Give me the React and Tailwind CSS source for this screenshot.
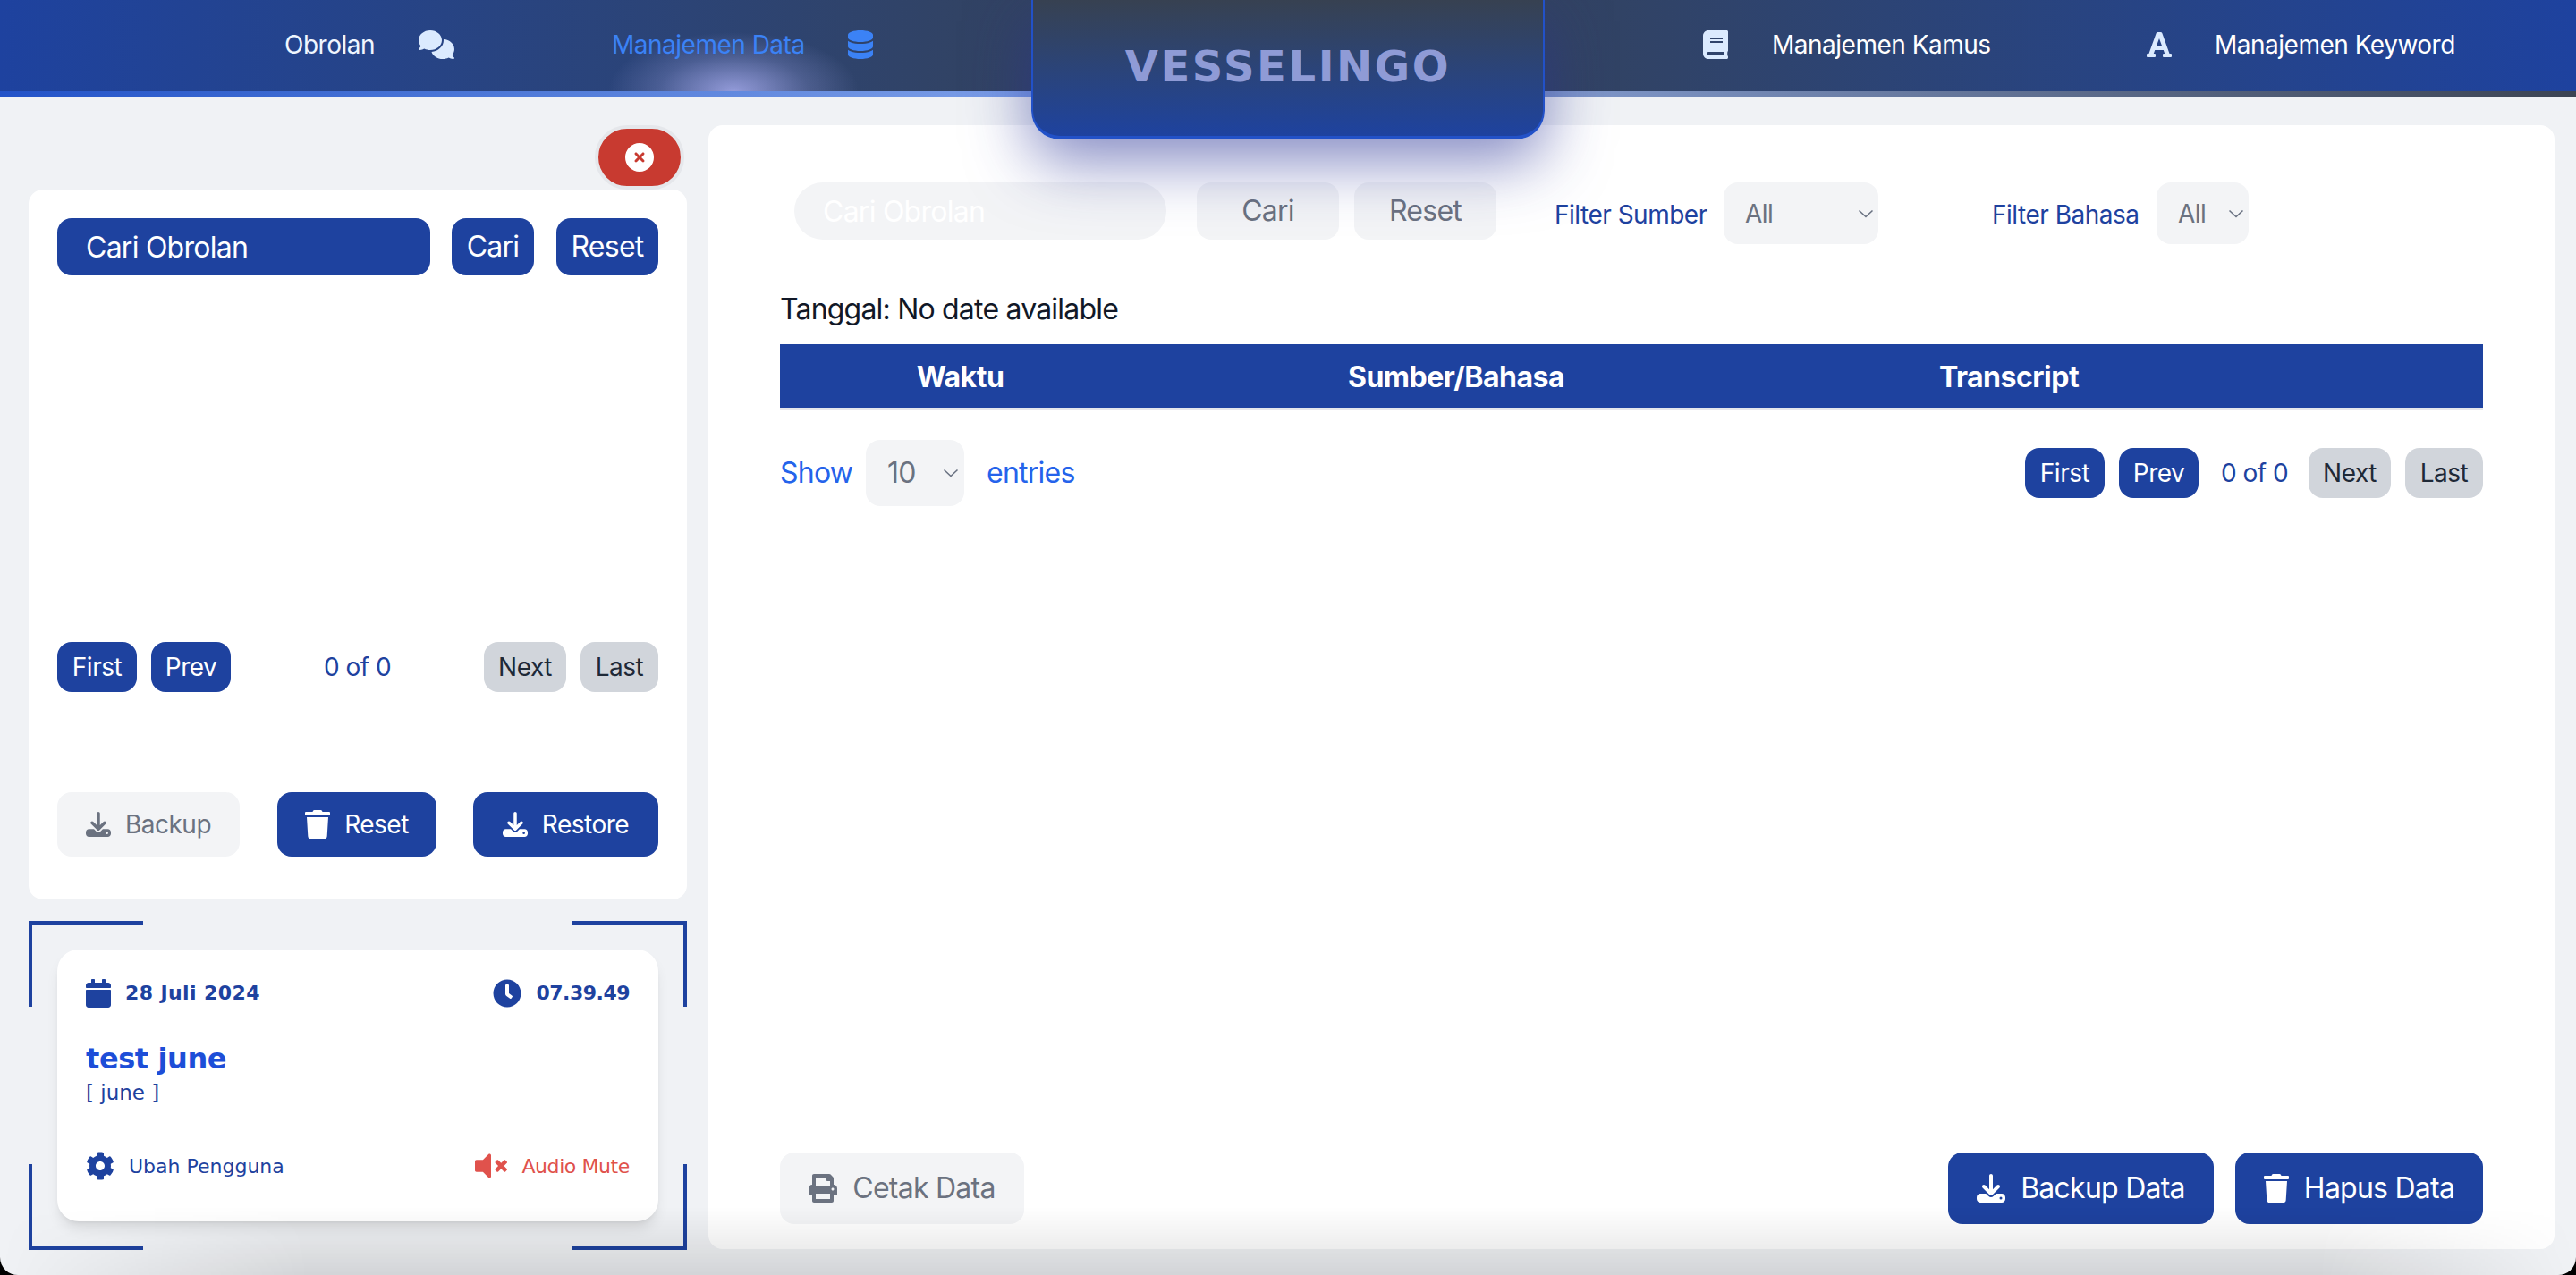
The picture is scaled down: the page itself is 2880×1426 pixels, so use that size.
import { FaBook, FaFont, FaCalendar, FaClock, FaCog, FaVolumeMute, FaTrash, FaPrint } from "react-icons/fa";
import { FaComments, FaDatabase, FaDownload, FaCircleXmark } from "react-icons/fa6";

function Chevron() {
  return (
    <svg viewBox="0 0 18 10" className="w-[18px] h-[10px] text-gray-500" fill="none" stroke="currentColor" strokeWidth="1.6">
      <path d="M1.5 1.5 9 8.5l7.5-7" />
    </svg>
  );
}

function Pager({ small }) {
  const btn = "h-[56px] rounded-2xl flex items-center justify-center text-[28px]";
  const blue = btn + " bg-[#1e429f] text-white";
  const gray = btn + " bg-[#d1d5db] text-[#1f2937]";
  return (
    <>
      <button className={blue + " w-[89px]"}>First</button>
      <button className={blue + " w-[89px] ml-4"}>Prev</button>
      <span className={small ? "text-[28px] text-[#1e429f] ml-[104px] mr-[104px] w-[75px] text-center whitespace-nowrap" : "text-[28px] text-[#1e429f] ml-[25px] mr-[24px] w-[74px] text-center whitespace-nowrap"}>0 of 0</span>
      <button className={gray + " w-[92px]"}>Next</button>
      <button className={gray + " w-[87px] ml-4"}>Last</button>
    </>
  );
}

function Corner({ className }) {
  return <div className={"absolute w-[128px] h-[96px] border-[#1e429f] " + className} />;
}

export default function App() {
  const orb = "[font-family:'DejaVu_Sans',sans-serif]";
  return (
    <div className="w-[2880px] h-[1426px] bg-black [font-family:Inter,sans-serif] tracking-[-0.5px] overflow-hidden">
      <div className="relative w-full h-full bg-[#f0f2f5] rounded-b-[20px] overflow-hidden flex flex-col">
        <header className="relative h-[102px] shrink-0 pb-[2px] bg-gradient-to-r from-[#1e429f] via-[#374151] to-[#1e429f] flex items-center justify-between overflow-hidden">
          <div className="absolute left-[680px] top-[36px] w-[280px] h-[132px] rounded-full bg-[radial-gradient(closest-side,rgba(165,170,235,0.85),rgba(165,170,235,0.25)_60%,transparent)]" />
          <nav className="relative flex items-center pl-[318px] text-[28px]">
            <span className="w-[101px] text-[#eff6ff]">Obrolan</span>
            <FaComments className="ml-[49px] w-[40px] h-[32px] text-[#dbeafe]" />
            <span className="ml-[176px] w-[215px] text-[#3b82f6] whitespace-nowrap">Manajemen Data</span>
            <FaDatabase className="ml-[49px] w-[28px] h-[32px] text-[#3b82f6]" />
          </nav>
          <nav className="relative flex items-center pr-[137px] text-[28px] text-white">
            <FaBook className="w-[28px] h-[32px] text-[#dbeafe]" />
            <span className="ml-[49px] w-[242px] whitespace-nowrap">Manajemen Kamus</span>
            <FaFont className="ml-[177px] w-[28px] h-[32px] text-[#dbeafe]" />
            <span className="ml-[48px] w-[267px] whitespace-nowrap">Manajemen Keyword</span>
          </nav>
        </header>
        <div className="h-[6px] shrink-0 bg-gradient-to-r from-[#2353c8] via-[#93b0ee] to-[#3c4453]" />

        <div className="absolute left-[1153px] top-0 z-20 w-[574px] h-[156px] rounded-b-[32px] border-x-2 border-b-4 border-[#2251c8] bg-gradient-to-b from-[#374151] to-[#1e429f] shadow-[0_24px_70px_rgba(40,50,150,0.58)] flex justify-center pt-[48px]">
          <span className={orb + " text-[48px] leading-[52px] font-bold text-[#8f9bd6] tracking-[2.6px]"}>VESSELINGO</span>
        </div>

        <main className="flex-1 flex items-start pt-8 pl-8 pr-6">
          <aside className="w-[736px] shrink-0 flex flex-col">
            <div className="self-end mr-[3px] w-[100px] h-[72px] rounded-full border-4 border-[#e5e7eb] bg-[#c83a30] flex items-center justify-center">
              <FaCircleXmark className="w-8 h-8 text-white" />
            </div>
            <section className="h-[794px] bg-white rounded-2xl p-8 flex flex-col">
              <div className="flex text-[32px] tracking-[-0.75px] text-white">
                <input placeholder="Cari Obrolan" className="w-[417px] h-16 rounded-2xl bg-[#1e429f] px-8 outline-none placeholder:text-white" />
                <button className="ml-6 w-[92px] h-16 rounded-2xl bg-[#1e429f]">Cari</button>
                <button className="ml-[25px] w-[114px] h-16 rounded-2xl bg-[#1e429f]">Reset</button>
              </div>
              <div className="mt-[410px] flex items-center">
                <Pager small />
              </div>
              <div className="mt-[112px] flex justify-between text-[28px]">
                <button className="w-[204px] h-[72px] rounded-2xl bg-[#f3f4f6] text-[#6b7280] flex items-center justify-center gap-4">
                  <FaDownload className="w-7 h-7" /> Backup
                </button>
                <button className="ml-[42px] w-[178px] h-[72px] rounded-2xl bg-[#1e429f] text-white flex items-center justify-center gap-4">
                  <FaTrash className="w-7 h-8" /> Reset
                </button>
                <button className="ml-[41px] w-[207px] h-[72px] rounded-2xl bg-[#1e429f] text-white flex items-center justify-center gap-4">
                  <FaDownload className="w-7 h-7" /> Restore
                </button>
              </div>
            </section>

            <section className="relative mt-6 h-[368px] pt-8 px-8">
              <Corner className="left-0 top-0 border-l-4 border-t-4" />
              <Corner className="right-0 top-0 border-r-4 border-t-4" />
              <Corner className="left-0 bottom-0 border-l-4 border-b-4" />
              <Corner className="right-0 bottom-0 border-r-4 border-b-4" />
              <div className={orb + " relative h-[304px] bg-white rounded-3xl shadow-lg p-8 text-[#1e429f] tracking-normal"}>
                <div className="flex items-center justify-between">
                  <div className="flex items-center">
                    <FaCalendar className="w-7 h-8" />
                    <span className="ml-4 text-[22px] font-bold tracking-[0.4px] whitespace-nowrap">28 Juli 2024</span>
                  </div>
                  <div className="flex items-center">
                    <FaClock className="w-8 h-8" />
                    <span className="ml-4 text-[22px] font-bold tracking-[-0.5px] whitespace-nowrap">07.39.49</span>
                  </div>
                </div>
                <div className="mt-[34px] text-[32px] leading-[46px] font-bold tracking-[-0.4px] text-[#1d4ed8] whitespace-nowrap">test june</div>
                <div className="text-[23px] leading-[30px] whitespace-nowrap">[ june ]</div>
                <div className="mt-[49px] flex items-center justify-between">
                  <div className="flex items-center">
                    <FaCog className="w-8 h-8" />
                    <span className="ml-4 text-[22px] whitespace-nowrap">Ubah Pengguna</span>
                  </div>
                  <div className="flex items-center text-[#e0524c]">
                    <FaVolumeMute className="w-9 h-9" />
                    <span className="ml-4 text-[22px] tracking-[-0.4px] whitespace-nowrap">Audio Mute</span>
                  </div>
                </div>
              </div>
            </section>
          </aside>

          <section className="ml-6 flex-1 h-[1257px] bg-white rounded-2xl pt-16 px-20 pb-7 flex flex-col">
            <div className="flex items-start text-[32px] tracking-[-0.75px]">
              <input placeholder="Cari Obrolan" className="ml-4 w-[416px] h-16 rounded-full bg-[#f3f4f6] px-8 outline-none placeholder:text-white" />
              <button className="ml-[34px] w-[159px] h-16 rounded-2xl bg-[#f3f4f6] text-[#6b7280]">Cari</button>
              <button className="ml-[17px] w-[159px] h-16 rounded-2xl bg-[#f3f4f6] text-[#6b7280]">Reset</button>
              <span className="ml-[65px] w-[172px] h-[72px] flex items-center text-[28px] tracking-[-0.5px] text-[#1e429f] whitespace-nowrap">Filter Sumber</span>
              <div className="ml-[17px] w-[173px] h-[69px] rounded-2xl bg-[#f3f4f6] pl-6 pr-[5px] flex items-center justify-between text-[28px] tracking-[-0.5px] text-[#6b7280]">
                All <Chevron />
              </div>
              <span className="ml-[127px] w-[167px] h-[72px] flex items-center text-[28px] tracking-[-0.5px] text-[#1e429f] whitespace-nowrap">Filter Bahasa</span>
              <div className="ml-[17px] w-[103px] h-[69px] rounded-2xl bg-[#f3f4f6] pl-6 pr-[5px] flex items-center justify-between text-[28px] tracking-[-0.5px] text-[#6b7280]">
                All <Chevron />
              </div>
            </div>

            <p className="mt-[46px] text-[32px] tracking-[-0.8px] leading-[48px] text-[#111827]">Tanggal: No date available</p>

            <table className="mt-[15px] w-full table-fixed border-b-2 border-[#e5e7eb]">
              <colgroup>
                <col className="w-[403px]" />
                <col className="w-[706px]" />
                <col className="w-[530px]" />
                <col />
              </colgroup>
              <thead>
                <tr className="h-[72px] bg-[#1e429f] text-white text-[32px] tracking-[-0.5px] font-bold">
                  <th className="pt-[2px]">Waktu</th>
                  <th className="pt-[2px]">Sumber/Bahasa</th>
                  <th className="pt-[2px]">Transcript</th>
                  <th />
                </tr>
              </thead>
            </table>

            <div className="mt-[34px] flex items-center justify-between">
              <div className="flex items-center text-[32px] tracking-[-0.75px] text-[#2563eb]">
                <span className="w-[79px]">Show</span>
                <div className="ml-[17px] w-[110px] h-[74px] rounded-2xl bg-[#f3f4f6] pl-6 pr-[6px] flex items-center justify-between text-[#6b7280]">
                  10 <Chevron />
                </div>
                <span className="ml-[25px]">entries</span>
              </div>
              <div className="flex items-center">
                <Pager />
              </div>
            </div>

            <div className="mt-auto flex items-center text-[32px] tracking-[-0.75px]">
              <button className="w-[273px] h-20 rounded-2xl bg-[#f3f4f6] text-[#6b7280] flex items-center justify-center gap-[17px]">
                <FaPrint className="w-8 h-8" /> Cetak Data
              </button>
              <button className="ml-auto w-[297px] h-20 rounded-2xl bg-[#1e429f] text-white flex items-center justify-center gap-[17px]">
                <FaDownload className="w-8 h-8" /> Backup Data
              </button>
              <button className="ml-6 w-[277px] h-20 rounded-2xl bg-[#1e429f] text-white flex items-center justify-center gap-[17px]">
                <FaTrash className="w-7 h-8" /> Hapus Data
              </button>
            </div>
          </section>
        </main>

        <div className="absolute inset-x-0 bottom-0 h-[76px] z-10 pointer-events-none bg-gradient-to-t from-black/12 to-transparent [mask-image:linear-gradient(to_right,transparent,black_12%,black_90%,transparent)]" />
      </div>
    </div>
  );
}
